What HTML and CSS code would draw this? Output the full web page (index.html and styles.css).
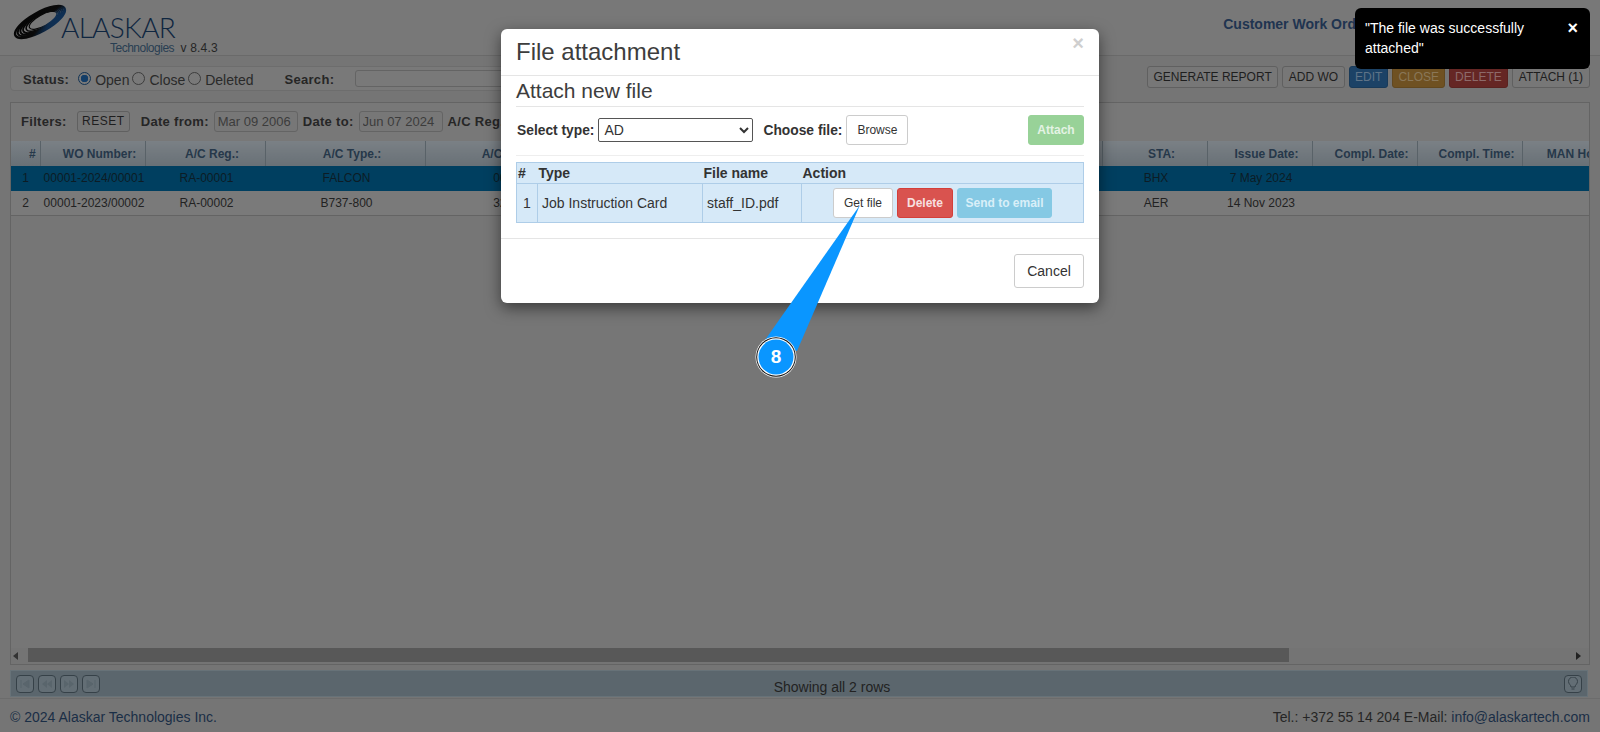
FILE: index.html
```html
<!DOCTYPE html>
<html lang="en">
<head>
    <meta charset="UTF-8">
    <title>Customer Work Orders</title>
    <link rel="stylesheet" href="styles.css">
</head>
<body>
    <header class="top">
        <div class="brand">
            <svg class="brand-mark" width="56" height="36" viewBox="0 0 56 36">
                <defs>
                    <linearGradient id="ring" x1="0" y1="0" x2="1" y2="1">
                        <stop offset="0" stop-color="#050505"/>
                        <stop offset="0.6" stop-color="#0a0a0a"/>
                        <stop offset="0.8" stop-color="#0e2c4e"/>
                        <stop offset="1" stop-color="#10365f"/>
                    </linearGradient>
                </defs>
                <g fill="none" stroke="url(#ring)" transform="rotate(-29 28 18)">
                    <ellipse cx="28" cy="18" rx="28" ry="9.500" stroke-width="2.400"/>
                    <ellipse cx="28.500" cy="18" rx="25.500" ry="8.800" stroke-width="2"/>
                    <ellipse cx="29" cy="18" rx="23" ry="8" stroke-width="2"/>
                    <ellipse cx="29.500" cy="18" rx="20.500" ry="7.200" stroke-width="1.800"/>
                    <ellipse cx="30.500" cy="18" rx="18" ry="6.400" stroke-width="1.600"/>
                    <ellipse cx="31.500" cy="18" rx="15.500" ry="5.600" stroke-width="1.200"/>
                </g>
            </svg>
            <div class="brand-text">
                <div class="brand-name">ALASKAR</div>
                <div class="brand-sub"><span class="brand-tech">Technologies</span> <span class="brand-ver">v 8.4.3</span></div>
            </div>
        </div>
        <div class="page-title">Customer Work Orders</div>
    </header>

    <main class="content">
        <div class="toolbar">
            <div class="status-box">
                <label class="lbl">Status:</label>
                <span class="radio on"></span><span class="radio-text">Open</span>
                <span class="radio"></span><span class="radio-text">Close</span>
                <span class="radio"></span><span class="radio-text">Deleted</span>
                <label class="lbl search-lbl">Search:</label>
                <input class="search-input" type="text">
            </div>
            <div class="actions">
                <button class="tbtn">GENERATE REPORT</button>
                <button class="tbtn wide">ADD WO</button>
                <button class="tbtn edit">EDIT</button>
                <button class="tbtn close">CLOSE</button>
                <button class="tbtn del">DELETE</button>
                <button class="tbtn wide">ATTACH (1)</button>
            </div>
        </div>

        <section class="panel">
            <div class="filters">
                <label class="lbl">Filters:</label>
                <button class="tbtn reset">RESET</button>
                <label class="lbl from-lbl">Date from:</label>
                <input class="date-input" type="text" value="Mar 09 2006">
                <label class="lbl">Date to:</label>
                <input class="date-input" type="text" value="Jun 07 2024">
                <label class="lbl">A/C Reg.:</label>
            </div>
            <div class="grid-wrap">
                <table class="grid">
                    <colgroup>
                        <col class="c-num"><col class="c-wo"><col class="c-reg"><col class="c-type"><col class="c-sn"><col class="c-mid">
                        <col class="c-std"><col class="c-std"><col class="c-std"><col class="c-std"><col class="c-std">
                    </colgroup>
                    <thead>
                        <tr>
                            <th>#</th><th>WO Number:</th><th>A/C Reg.:</th><th>A/C Type.:</th><th>A/C Serial:</th><th></th>
                            <th>STA:</th><th>Issue Date:</th><th>Compl. Date:</th><th>Compl. Time:</th><th>MAN Hours:</th>
                        </tr>
                    </thead>
                    <tbody>
                        <tr class="sel">
                            <td class="idx">1</td><td>00001-2024/00001</td><td>RA-00001</td><td>FALCON</td><td>0001</td><td></td>
                            <td>BHX</td><td>7 May 2024</td><td></td><td></td><td></td>
                        </tr>
                        <tr>
                            <td class="idx">2</td><td>00001-2023/00002</td><td>RA-00002</td><td>B737-800</td><td>3245</td><td></td>
                            <td>AER</td><td>14 Nov 2023</td><td></td><td></td><td></td>
                        </tr>
                    </tbody>
                </table>
            </div>
            <div class="hscroll">
                <span class="arrow left"></span>
                <div class="hscroll-track"><div class="hscroll-thumb"></div></div>
                <span class="arrow right"></span>
            </div>
        </section>

        <div class="pager">
            <div class="pager-btns">
                <button class="pbtn"><svg width="12" height="10" viewBox="0 0 12 10"><path d="M2 1v8M10 1v8L4 5z" fill="#59656c" stroke="#59656c"/></svg></button>
                <button class="pbtn"><svg width="12" height="10" viewBox="0 0 12 10"><path d="M6 1v8L1 5zM11 1v8L6 5z" fill="#59656c"/></svg></button>
                <button class="pbtn"><svg width="12" height="10" viewBox="0 0 12 10"><path d="M1 1v8l5-4zM6 1v8l5-4z" fill="#59656c"/></svg></button>
                <button class="pbtn"><svg width="12" height="10" viewBox="0 0 12 10"><path d="M10 1v8M2 1v8l6-4z" fill="#59656c" stroke="#59656c"/></svg></button>
            </div>
            <div class="pager-text">Showing all 2 rows</div>
            <button class="pbtn bulb"><svg width="12" height="14" viewBox="0 0 12 14"><path d="M4 10c0-2-2.500-3-2.500-5.500a4.500 4.500 0 0 1 9 0C10.500 7 8 8 8 10zM4.500 12h3" fill="none" stroke="#364148" stroke-width="1"/></svg></button>
        </div>
    </main>

    <footer class="foot">
        <span class="foot-copy">© 2024 Alaskar Technologies Inc.</span>
        <span class="foot-contact">Tel.: +372 55 14 204 E-Mail: <a href="#">info@alaskartech.com</a></span>
    </footer>

    <div class="modal">
        <div class="modal-head">
            <h4>File attachment</h4>
            <span class="modal-x">×</span>
        </div>
        <div class="modal-body">
            <h5>Attach new file</h5>
            <div class="attach-row">
                <label class="mlbl">Select type:</label>
                <select class="type-select"><option>AD</option></select>
                <label class="mlbl file-lbl">Choose file:</label>
                <button class="mbtn">Browse</button>
                <button class="mbtn attach">Attach</button>
            </div>
            <table class="files">
                <colgroup><col class="f-num"><col class="f-type"><col class="f-name"><col></colgroup>
                <thead>
                    <tr><th>#</th><th>Type</th><th>File name</th><th>Action</th></tr>
                </thead>
                <tbody>
                    <tr>
                        <td class="num">1</td>
                        <td>Job Instruction Card</td>
                        <td>staff_ID.pdf</td>
                        <td>
                            <div class="file-actions">
                                <button class="mbtn getfile">Get file</button>
                                <button class="mbtn danger">Delete</button>
                                <button class="mbtn info">Send to email</button>
                            </div>
                        </td>
                    </tr>
                </tbody>
            </table>
        </div>
        <div class="modal-foot">
            <button class="mbtn cancel">Cancel</button>
        </div>
    </div>

    <div class="toast">
        <div class="toast-text">"The file was successfully attached"</div>
        <span class="toast-x">×</span>
    </div>

    <svg class="callout" width="1600" height="732" viewBox="0 0 1600 732">
        <polygon points="860,205 765,340 797,351" fill="#0a96ff"/>
        <circle cx="776" cy="357" r="20.500" fill="#fff"/>
        <circle cx="776" cy="357" r="19.800" fill="#111"/>
        <circle cx="776" cy="357" r="18.800" fill="#fff"/>
        <circle cx="776" cy="357" r="17.500" fill="#0a96ff"/>
    </svg>
    <div class="callout-num">8</div>
</body>
</html>
```

FILE: styles.css
```css
* { box-sizing: border-box; }
html, body { height: 100%; }
body {
    margin: 0;
    height: 732px;
    overflow: hidden;
    display: flex;
    flex-direction: column;
    background-color: #757575;
    font-family: "Liberation Sans", Arial, sans-serif;
    font-size: 13px;
    color: #222;
}
button, input, select { font-family: inherit; }

/* top bar */
.top {
    height: 56px;
    flex: none;
    display: flex;
    justify-content: space-between;
    background: #787878;
    border-bottom: 1px solid #6a6a6a;
}
.brand { display: flex; padding: 4px 0 0 12px; }
.brand-mark { flex: none; }
.brand-text { margin-left: -7px; padding-top: 11px; }
.brand-name {
    font-family: Lato, "Liberation Sans", sans-serif;
    font-weight: 300;
    font-size: 28px;
    line-height: 24px;
    letter-spacing: -0.7px;
    color: #0f2640;
}
.brand-sub { margin-top: 2px; padding-left: 49px; font-size: 12px; line-height: 14px; white-space: nowrap; }
.brand-tech { color: #283e52; letter-spacing: -0.5px; }
.brand-ver { color: #262626; margin-left: 3px; letter-spacing: 0.2px; }
.page-title {
    padding: 16px 223px 0 0;
    font-size: 14px;
    font-weight: bold;
    color: #1f3450;
    white-space: nowrap;
}

.content { flex: none; padding: 0 10px; }

.toolbar {
    display: flex;
    justify-content: space-between;
    align-items: flex-start;
    margin-top: 10px;
}
.status-box {
    width: 1000px;
    height: 25px;
    display: flex;
    align-items: center;
    padding-left: 12px;
    background: #797979;
    border: 1px solid #6d6d6d;
    border-radius: 4px;
}
.status-box .lbl { padding-top: 2px; }
.lbl { font-weight: bold; font-size: 13px; color: #262626; white-space: nowrap; letter-spacing: 0.3px; }
.radio {
    width: 13px;
    height: 13px;
    margin-left: 3px;
    border: 1px solid #3d3d3d;
    border-radius: 50%;
    background: #797979;
}
.lbl + .radio { margin-left: 9px; }
.radio.on { border-color: #123354; background: radial-gradient(circle, #143e68 0 3.500px, #797979 4px); }
.radio-text { margin-left: 4px; padding-top: 3px; font-size: 14px; color: #2a2a2a; }
.search-lbl { margin-left: 31px; }
.search-input {
    width: 400px;
    height: 17px;
    margin-left: 21px;
    background: #797979;
    border: 1px solid #646464;
    border-radius: 3px;
}

.actions { display: flex; gap: 4px; }
.tbtn {
    height: 22px;
    padding: 0 5px;
    font-size: 12px;
    color: #1e1e1e;
    background: #777;
    border: 1px solid #606060;
    border-radius: 3px;
    white-space: nowrap;
}
.tbtn.wide { padding: 0 6px; }
.tbtn.edit { background: #1c4266; border-color: #193a59; color: #5f7387; }
.tbtn.close { background: #6f5122; border-color: #62481f; color: #8a7758; }
.tbtn.del { background: #652624; border-color: #592220; color: #8d6a6a; }

/* main panel */
.panel {
    margin-top: 11px;
    height: 563px;
    display: flex;
    flex-direction: column;
    background: #767676;
    border: 1px solid #646464;
}
.filters { height: 38px; flex: none; display: flex; align-items: center; gap: 5px; padding: 0 0 2px 10px; background: #787878; }
.tbtn.reset { height: 21px; width: 53px; padding: 0; margin-left: 5px; letter-spacing: 0.5px; }
.from-lbl { margin-left: 6px; }
.date-input {
    width: 84px;
    height: 21px;
    padding: 0 3px;
    font-size: 13px;
    color: #3c3c3c;
    background: #777;
    border: 1px solid #646464;
    border-radius: 3px;
}
.grid-wrap { flex: 1; overflow: hidden; }
.grid { width: 1616px; table-layout: fixed; border-collapse: collapse; }
.c-num { width: 29px; }
.c-wo { width: 105px; }
.c-reg { width: 120px; }
.c-type { width: 160px; }
.c-sn { width: 160px; }
.c-mid { width: 517px; }
.c-std { width: 105px; }
.grid th {
    height: 25px;
    padding: 0 0 0 14px;
    font-size: 12px;
    color: #26384a;
    white-space: nowrap;
    overflow: hidden;
    background: linear-gradient(#7a8085, #687076);
    border-right: 1px solid #596268;
}
.grid td {
    height: 24px;
    padding: 0 0 0 3px;
    font-size: 12px;
    text-align: center;
    white-space: nowrap;
    background: #7a7a7a;
    border-bottom: 1px solid #646464;
}
.grid td.idx { padding: 0; }
.grid .sel td { height: 25px; padding-bottom: 1px; background: #003f60; color: #0c1c25; border-bottom: none; }

.hscroll { height: 16px; flex: none; display: flex; align-items: center; background: #747474; }
.arrow { width: 0; height: 0; border: 4px solid transparent; flex: none; }
.arrow.left { margin: 0 10px 0 2px; border-right: 5px solid #333; border-left: none; }
.arrow.right { margin: 0 8px 0 8px; border-left: 5px solid #222; border-right: none; }
.hscroll-track { flex: 1; height: 100%; }
.hscroll-thumb { width: 1261px; height: 14px; background: #585858; }

.pager {
    position: relative;
    height: 27px;
    width: 1578px;
    margin-top: 5px;
    display: flex;
    align-items: center;
    padding: 0 5px;
    background: #5b666d;
    border: 1px solid #677278;
}
.pager-btns { display: flex; gap: 4px; }
.pbtn {
    width: 18px;
    height: 18px;
    padding: 0;
    display: flex;
    align-items: center;
    justify-content: center;
    background: #636e75;
    border: 1px solid #364148;
    border-radius: 4px;
}
.pager-text { flex: 1; text-align: center; padding: 6px 0 0 0; font-size: 14px; color: #222; }
.bulb { flex: none; }

.foot {
    margin-top: 1px;
    height: 35px;
    flex: none;
    display: flex;
    justify-content: space-between;
    align-items: center;
    padding: 2px 10px 0;
    font-size: 14px;
    border-top: 1px solid #6c6c6c;
}
.foot-copy, .foot a { color: #1a2e46; text-decoration: none; }
.foot-contact { color: #252525; }

/* modal dialog */
.modal {
    position: absolute;
    top: 29px;
    left: 501px;
    width: 598px;
    height: 274px;
    background: #fff;
    border-radius: 6px;
    box-shadow: 0 5px 15px rgba(0, 0, 0, 0.5);
    color: #333;
}
.modal-head { height: 47px; position: relative; padding: 9px 15px 0; border-bottom: 1px solid #e5e5e5; color: #3d3d3d; }
.modal-head h4 { margin: 0; font-size: 24px; font-weight: normal; line-height: 28px; }
.modal-x { position: absolute; top: 3px; right: 15px; font-size: 20px; font-weight: bold; color: #cfcfcf; }
.modal-body { padding: 0 15px; }
.modal-body h5 { margin: 0; height: 31px; font-size: 21px; font-weight: normal; line-height: 30px; color: #3d3d3d; border-bottom: 1px solid #e5e5e5; }
.attach-row {
    height: 49px;
    display: flex;
    align-items: center;
    padding: 8px 0 10px;
    border-bottom: 1px solid #eee;
}
.mlbl { font-size: 13.800px; font-weight: bold; color: #333; white-space: nowrap; }
.attach-row > .mlbl:first-child { margin-left: 1px; }
.type-select {
    width: 155px;
    height: 24px;
    margin-left: 4px;
    padding-left: 1px;
    font-size: 14px;
    color: #333;
    background: #fff;
    border: 1px solid #555;
    border-radius: 2px;
}
.file-lbl { margin-left: 10px; }
.mbtn {
    height: 30px;
    font-size: 12px;
    color: #333;
    background: #fff;
    border: 1px solid #ccc;
    border-radius: 3px;
    white-space: nowrap;
}
.attach-row .mbtn { width: 62px; margin-left: 4px; }
.attach-row .attach {
    width: 56px;
    margin-left: auto;
    font-weight: bold;
    color: #e4f3e4;
    background: #98d298;
    border-color: #98d298;
}
.files {
    width: 100%;
    margin-top: 6px;
    table-layout: fixed;
    border-collapse: collapse;
    font-size: 14px;
    background: #d6e9f8;
    border: 1px solid #aecde8;
}
.f-num { width: 21px; }
.f-type { width: 165px; }
.f-name { width: 99px; }
.files th {
    height: 21px;
    padding: 0 1px;
    text-align: left;
    font-size: 14px;
    border-bottom: 1px solid #aecde8;
}
.files td { height: 39px; padding: 0 4px; border-right: 1px solid #aecde8; white-space: nowrap; }
.files td.num { text-align: center; }
.file-actions { display: flex; gap: 4px; padding-left: 27px; }
.getfile { width: 60px; padding: 0; }
.danger { width: 56px; padding: 0; font-weight: bold; color: #f7e0e0; background: #d9534f; border-color: #d43f3a; }
.info { width: 95px; padding: 0; font-weight: bold; color: #d9eff8; background: #85c9e4; border-color: #85c9e4; }
.modal-foot {
    margin-top: 15px;
    padding: 15px 15px 0;
    display: flex;
    justify-content: flex-end;
    border-top: 1px solid #e5e5e5;
}
.cancel { width: 70px; height: 34px; font-size: 14px; }

/* toast */
.toast {
    position: absolute;
    top: 8px;
    left: 1355px;
    width: 235px;
    height: 61px;
    display: flex;
    padding: 10px 10px 0;
    background: #000;
    border-radius: 6px;
    color: #fff;
    font-size: 14px;
    line-height: 20px;
}
.toast-text { width: 180px; }
.toast-x { margin-left: auto; margin-right: 2px; font-size: 18px; font-weight: bold; line-height: 20px; }

/* tutorial callout */
.callout { position: absolute; top: 0; left: 0; pointer-events: none; }
.callout-num {
    position: absolute;
    top: 347px;
    left: 766px;
    width: 20px;
    text-align: center;
    font-size: 19px;
    line-height: 20px;
    font-weight: bold;
    color: #fff;
}
```
